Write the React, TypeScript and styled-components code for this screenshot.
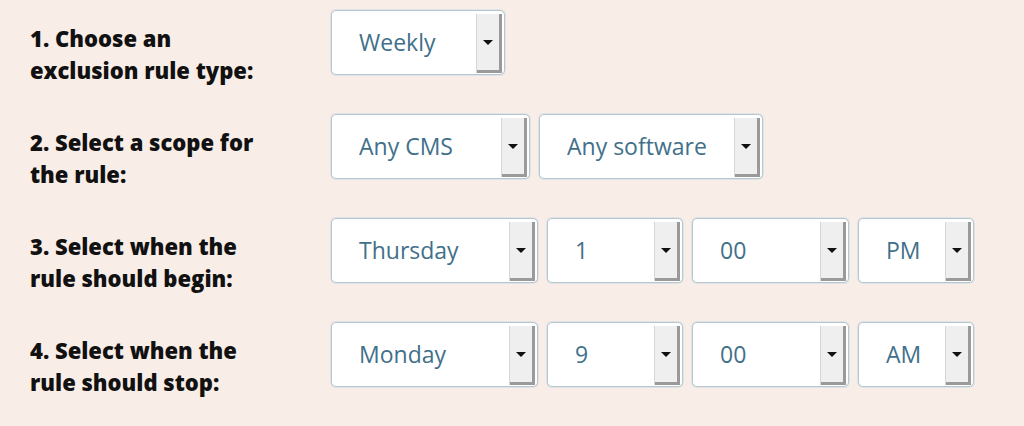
import styled, { createGlobalStyle } from "styled-components";

const GlobalStyle = createGlobalStyle`
  html, body {
    margin: 0;
    padding: 0;
    background: #f9ede7;
  }
  body {
    font-family: "Open Sans", "Liberation Sans", sans-serif;
  }
`;

type Field = { value: string; width: number };

const rows: { label: string[]; fields: Field[] }[] = [
  {
    label: ["1. Choose an", "exclusion rule type:"],
    fields: [{ value: "Weekly", width: 174 }],
  },
  {
    label: ["2. Select a scope for", "the rule:"],
    fields: [
      { value: "Any CMS", width: 199 },
      { value: "Any software", width: 224 },
    ],
  },
  {
    label: ["3. Select when the", "rule should begin:"],
    fields: [
      { value: "Thursday", width: 207 },
      { value: "1", width: 136 },
      { value: "00", width: 157 },
      { value: "PM", width: 116 },
    ],
  },
  {
    label: ["4. Select when the", "rule should stop:"],
    fields: [
      { value: "Monday", width: 207 },
      { value: "9", width: 136 },
      { value: "00", width: 157 },
      { value: "AM", width: 116 },
    ],
  },
];

export default function App() {
  return (
    <>
      <GlobalStyle />
      <Form>
        {rows.map((row) => (
          <Row key={row.label[0]}>
            <Label>
              {row.label.map((line) => (
                <span key={line}>{line}</span>
              ))}
            </Label>
            <Fields>
              {row.fields.map((f, i) => (
                <Select key={i} $width={f.width}>
                  <Value>{f.value}</Value>
                  <Arrow>
                    <Caret />
                  </Arrow>
                </Select>
              ))}
            </Fields>
          </Row>
        ))}
      </Form>
    </>
  );
}

const Form = styled.div`
  display: flex;
  flex-direction: column;
  padding: 10px 0 0 30px;
  width: 1024px;
  height: 426px;
  box-sizing: border-box;
`;

const Row = styled.div`
  display: grid;
  grid-template-columns: 301px 1fr;
  align-items: start;
  height: 104px;
`;

const Label = styled.div`
  display: flex;
  flex-direction: column;
  margin-top: 12px;
  font-size: 22px;
  line-height: 32px;
  font-weight: 800;
  color: #111;
  white-space: nowrap;
`;

const Fields = styled.div`
  display: flex;
  gap: 9px;
`;

const Select = styled.div<{ $width: number }>`
  width: ${(p) => p.$width}px;
  height: 65px;
  box-sizing: border-box;
  display: flex;
  align-items: stretch;
  background: #fff;
  border: 1px solid #b9c6cd;
  border-radius: 5px;
  box-shadow: 0 0 0 1px #dde3e6;
  padding: 3px 2px 1px 0;
`;

const Value = styled.div`
  flex: 1;
  display: flex;
  align-items: center;
  padding-left: 27px;
  padding-bottom: 4px;
  font-size: 23px;
  color: #41708a;
`;

const Arrow = styled.div`
  width: 22px;
  display: flex;
  align-items: center;
  justify-content: center;
  background: #efefef;
  border-left: 1px solid #d6d6d6;
  box-shadow: inset -3px -3px 0 #9a9a9a;
  padding: 0 3px 3px 0;
`;

const Caret = styled.span`
  width: 0;
  height: 0;
  border-left: 5px solid transparent;
  border-right: 5px solid transparent;
  border-top: 5px solid #111;
`;
